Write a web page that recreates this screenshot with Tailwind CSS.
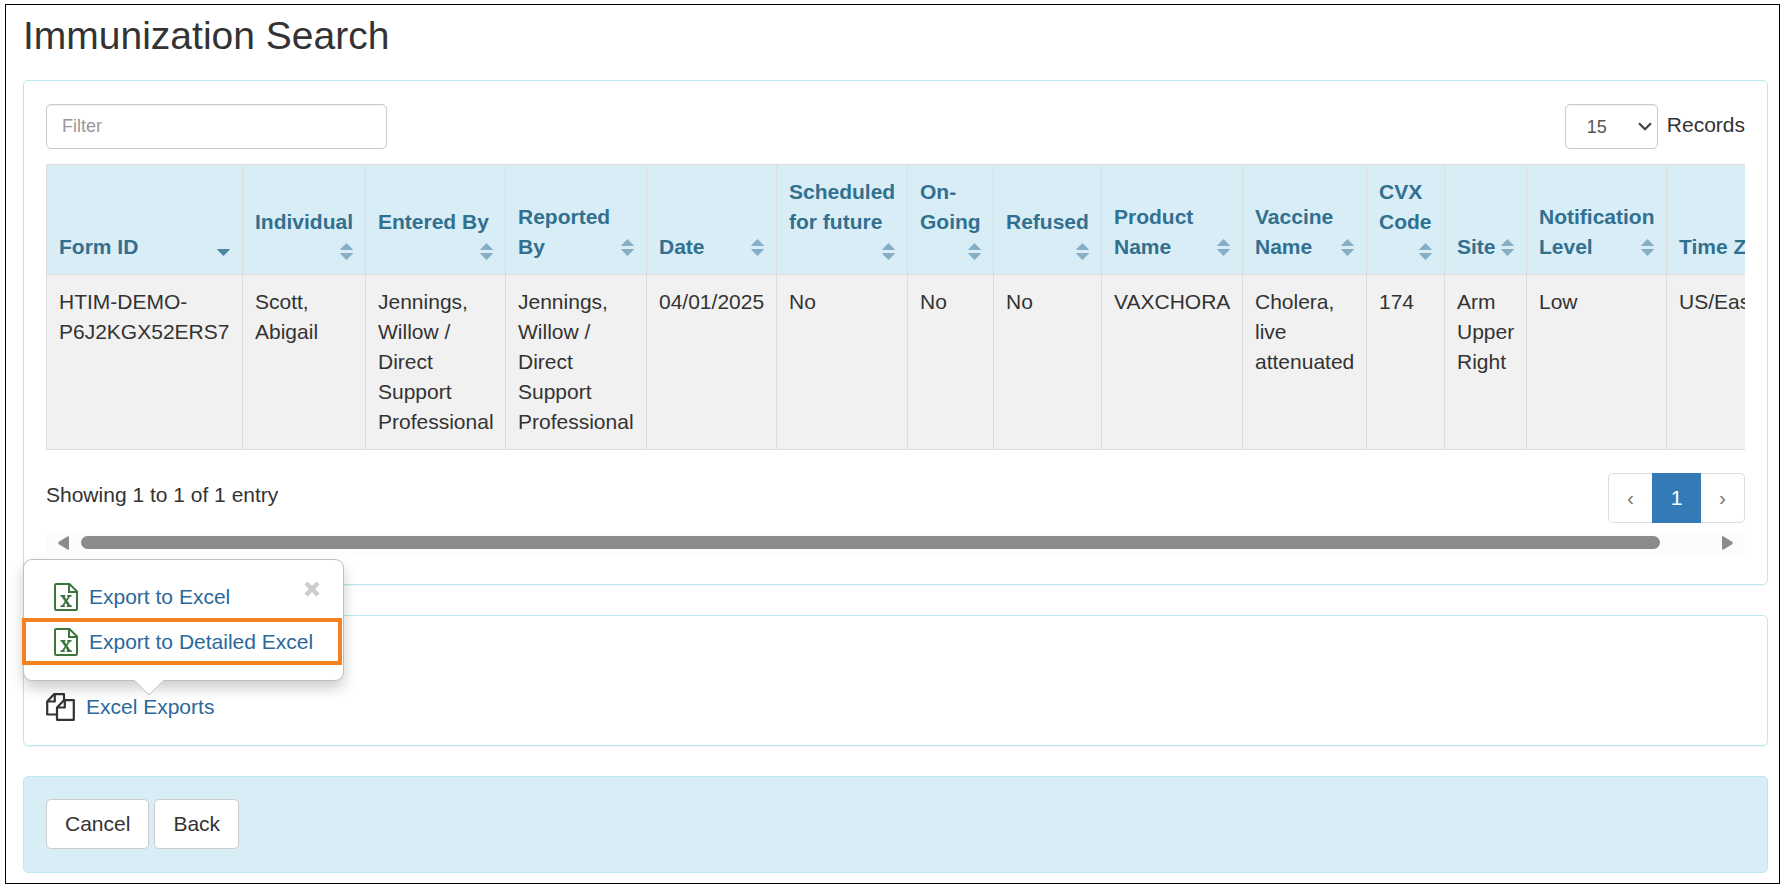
<!DOCTYPE html>
<html lang="en">
<head>
<meta charset="utf-8">
<title>Immunization Search</title>
<script src="https://cdn.jsdelivr.net/npm/@tailwindcss/browser@4"></script>
</head>
<body class="bg-white font-['Liberation_Sans',Arial,sans-serif] text-[21px] leading-[30px] text-[#333]">
<svg class="hidden" aria-hidden="true">
  <symbol id="sort" viewBox="0 0 13 17"><path d="M6.5 0 12.7 6.2V7H.3V6.2ZM.3 10H12.7V10.8L6.5 17 .3 10.8Z" fill="#86afc5"/></symbol>
  <symbol id="excel" viewBox="0 0 24 28"><path d="M1 2.2Q1 1 2.2 1H15.5L23 8.500V25.800Q23 27 21.800 27H2.200Q1 27 1 25.800Z" fill="none" stroke="#3c763d" stroke-width="2"/><path d="M15 1V9H23" fill="none" stroke="#3c763d" stroke-width="2"/><path d="M6.500 12.900H11.300M13.200 12.900H17.500M6.500 23.100H10.800M12.800 23.100H17.700" stroke="#3c763d" stroke-width="1.800"/><path d="M8.500 12.800 15.500 23.200" stroke="#3c763d" stroke-width="2.600"/><path d="M15.700 12.800 8.500 23.200" stroke="#3c763d" stroke-width="1.700"/></symbol>
</svg>
<div class="mt-1 mr-[2px] ml-[5px] border border-black pb-[10px] pl-[17px] pr-[11px]">
  <h1 class="pt-[9px] text-[39px] leading-[44px]">Immunization Search</h1>

  <section class="mt-[22px] rounded-[5px] border border-[#bce8f1] px-[22px] pt-[23px] pb-[30px] shadow-[0_1px_1px_rgba(0,0,0,0.05)]">
    <div class="flex items-start justify-between">
      <input type="text" aria-label="Filter" placeholder="Filter" class="h-[45px] w-[341px] rounded-[5px] border border-[#ccc] px-[15px] text-[18px] shadow-[inset_0_1px_1px_rgba(0,0,0,0.075)] placeholder:text-[#999]">
      <label class="flex items-start gap-[9px]">
        <span class="relative">
          <select class="block h-[45px] w-[93px] appearance-none rounded-[5px] border border-[#ccc] bg-white pr-8 pl-[21px] text-[18px] text-[#555] shadow-[inset_0_1px_1px_rgba(0,0,0,0.075)]"><option>15</option><option>25</option><option>50</option></select>
          <svg class="pointer-events-none absolute top-[18px] right-[6px] h-[9px] w-[14px]" viewBox="0 0 14 9" fill="none" stroke="#444" stroke-width="2.300"><path d="M1 1.200 7 7.200 13 1.200"/></svg>
        </span>
        <span class="pt-[6px]">Records</span>
      </label>
    </div>

    <div class="mt-[15px] overflow-hidden">
      <table class="w-[1758px] table-fixed border-collapse whitespace-nowrap">
        <colgroup>
          <col class="w-[196px]"><col class="w-[123px]"><col class="w-[140px]"><col class="w-[141px]"><col class="w-[130px]"><col class="w-[131px]"><col class="w-[86px]"><col class="w-[108px]"><col class="w-[141px]"><col class="w-[124px]"><col class="w-[78px]"><col class="w-[82px]"><col class="w-[140px]"><col>
        </colgroup>
        <thead class="bg-[#d9edf7] text-left text-[#31708f]">
          <tr class="h-[110px] align-bottom *:border *:border-[#ddd] *:px-3 *:pb-3">
            <th><div class="flex items-end justify-between">Form ID<svg class="mb-[6px] h-[7px] w-[13px]" viewBox="0 0 13 7"><path d="M.3 0H12.700V.8L6.500 7 .3.8Z" fill="#4c86a3"/></svg></div></th>
            <th>Individual<div class="flex h-[25px] items-end justify-end pb-[2px]"><svg class="h-[17px] w-[13px]"><use href="#sort"/></svg></div></th>
            <th>Entered By<div class="flex h-[25px] items-end justify-end pb-[2px]"><svg class="h-[17px] w-[13px]"><use href="#sort"/></svg></div></th>
            <th><div class="flex items-end justify-between"><span>Reported<br>By</span><svg class="mb-[6px] h-[17px] w-[13px]"><use href="#sort"/></svg></div></th>
            <th><div class="flex items-end justify-between">Date<svg class="mb-[6px] h-[17px] w-[13px]"><use href="#sort"/></svg></div></th>
            <th>Scheduled<br>for future<div class="flex h-[25px] items-end justify-end pb-[2px]"><svg class="h-[17px] w-[13px]"><use href="#sort"/></svg></div></th>
            <th>On-<br>Going<div class="flex h-[25px] items-end justify-end pb-[2px]"><svg class="h-[17px] w-[13px]"><use href="#sort"/></svg></div></th>
            <th>Refused<div class="flex h-[25px] items-end justify-end pb-[2px]"><svg class="h-[17px] w-[13px]"><use href="#sort"/></svg></div></th>
            <th><div class="flex items-end justify-between"><span>Product<br>Name</span><svg class="mb-[6px] h-[17px] w-[13px]"><use href="#sort"/></svg></div></th>
            <th><div class="flex items-end justify-between"><span>Vaccine<br>Name</span><svg class="mb-[6px] h-[17px] w-[13px]"><use href="#sort"/></svg></div></th>
            <th>CVX<br>Code<div class="flex h-[25px] items-end justify-end pb-[2px]"><svg class="h-[17px] w-[13px]"><use href="#sort"/></svg></div></th>
            <th><div class="flex items-end justify-between">Site<svg class="mb-[6px] h-[17px] w-[13px]"><use href="#sort"/></svg></div></th>
            <th>Notification<div class="flex items-end justify-between">Level<svg class="mb-[6px] h-[17px] w-[13px]"><use href="#sort"/></svg></div></th>
            <th><div class="flex items-end justify-between">Time Zone<svg class="mb-[6px] h-[17px] w-[13px]"><use href="#sort"/></svg></div></th>
          </tr>
        </thead>
        <tbody class="bg-[#f1f1f1]">
          <tr class="align-top *:border *:border-[#ddd] *:px-3 *:py-3">
            <td>HTIM-DEMO-<br>P6J2KGX52ERS7</td>
            <td>Scott,<br>Abigail</td>
            <td>Jennings,<br>Willow /<br>Direct<br>Support<br>Professional</td>
            <td>Jennings,<br>Willow /<br>Direct<br>Support<br>Professional</td>
            <td>04/01/2025</td>
            <td>No</td>
            <td>No</td>
            <td>No</td>
            <td>VAXCHORA</td>
            <td>Cholera,<br>live<br>attenuated</td>
            <td>174</td>
            <td>Arm<br>Upper<br>Right</td>
            <td>Low</td>
            <td>US/Eastern</td>
          </tr>
        </tbody>
      </table>
    </div>

    <div class="mt-[23px] flex items-start justify-between">
      <p class="pt-[7px]">Showing 1 to 1 of 1 entry</p>
      <nav aria-label="Pages" class="flex h-[50px]">
        <button class="w-11 rounded-l-[5px] border border-r-0 border-[#ddd] text-[#777]">‹</button>
        <button class="w-[49px] bg-[#337ab7] text-white">1</button>
        <button class="w-11 rounded-r-[5px] border border-l-0 border-[#ddd] text-[#777]">›</button>
      </nav>
    </div>

    <div class="mt-2 flex h-[23px] items-center bg-[#fcfcfc] px-3">
      <svg class="h-[14px] w-[11px]" viewBox="0 0 11 14"><path d="M11 1.200V12.800Q11 14 9.800 13.700L1 8.200Q-.6 7 1 5.800L9.800.3Q11 0 11 1.200Z" fill="#8b8b8b"/></svg>
      <div class="mx-3 h-[13px] grow"><div class="h-[13px] w-[96.9%] rounded-full bg-[#8b8b8b]"></div></div>
      <svg class="h-[14px] w-[11px]" viewBox="0 0 11 14"><path d="M0 1.200V12.800Q0 14 1.200 13.700L10 8.200Q11.600 7 10 5.800L1.200.3Q0 0 0 1.200Z" fill="#8b8b8b"/></svg>
    </div>
  </section>

  <section class="relative mt-[30px] rounded-[5px] border border-[#bce8f1] px-[22px] pt-[76px] pb-[23px] shadow-[0_1px_1px_rgba(0,0,0,0.05)]">
    <div class="flex items-center gap-[11px]">
      <svg class="h-[28px] w-[29px]" viewBox="0 0 29 28" fill="none" stroke="#333" stroke-width="2.200" stroke-linejoin="round"><path d="M10.500 21.500H1.200V8.500L8 1.200H18V7M8.800 1.500V8.500H1.500"/><path d="M11 14.500 18 7.200H27.800V26.800H11ZM18.800 7.500V14.500H11.300"/></svg>
      <a href="#" class="text-[#2b689c]">Excel Exports</a>
    </div>
    <div class="absolute -top-[57px] -left-px w-[321px] rounded-[9px] border border-black/25 bg-white pt-[14px] pb-[15px] shadow-[0_7px_14px_rgba(0,0,0,0.2)]">
      <a href="#" class="flex h-[45px] items-center gap-[11px] pl-[30px] text-[#2b689c]"><svg class="h-[28px] w-[24px]"><use href="#excel"/></svg>Export to Excel</a>
      <a href="#" class="-mt-px mr-px -ml-[2px] flex h-[47px] items-center gap-[11px] border-4 border-[#f58220] pl-[28px] text-[#2b689c]"><svg class="h-[28px] w-[24px]"><use href="#excel"/></svg>Export to Detailed Excel</a>
      <button aria-label="Close" class="absolute top-[21px] right-[23px]"><svg class="h-4 w-4" viewBox="0 0 16 16" stroke="#ccc" stroke-width="4.500"><path d="M2 2 14 14M14 2 2 14"/></svg></button>
      <svg class="absolute top-[119px] left-[109px] h-[17px] w-[32px]" viewBox="0 0 32 17"><path d="M0 0H32L31 1 16 16 1 1Z" fill="#fff"/><path d="M1 1 16 16 31 1" fill="none" stroke="#c4c4c4"/></svg>
    </div>
  </section>

  <footer class="mt-[30px] flex gap-[5px] rounded-[5px] border border-[#bce8f1] bg-[#d9edf7] px-[22px] pt-[22px] pb-[23px]">
    <button class="h-[50px] rounded-[5px] border border-[#ccc] bg-white px-[18px]">Cancel</button>
    <button class="h-[50px] rounded-[5px] border border-[#ccc] bg-white px-[18px]">Back</button>
  </footer>
</div>
</body>
</html>
